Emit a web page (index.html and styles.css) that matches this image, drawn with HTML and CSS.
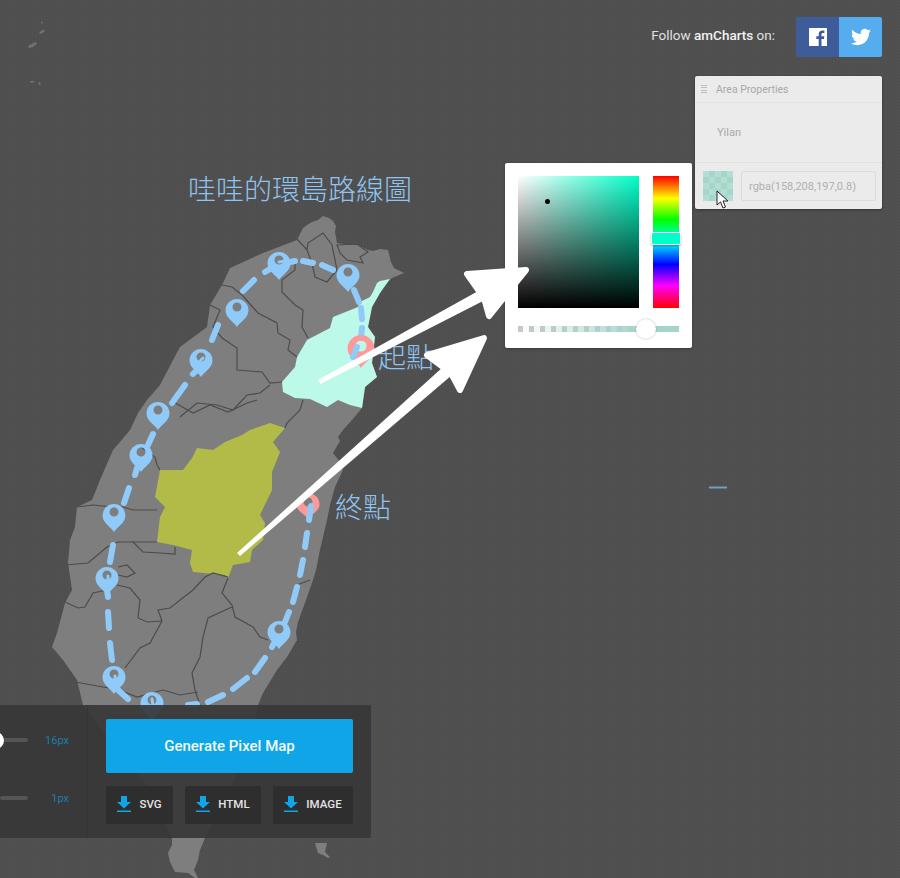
FILE: index.html
```html
<!DOCTYPE html>
<html lang="zh-Hant">
<head>
<meta charset="utf-8">
<title>Pixel Map Generator</title>
<link rel="stylesheet" href="styles.css">
</head>
<body>
<main class="stage">
  <svg class="canvas" width="900" height="878" viewBox="0 0 900 878">
    <g class="islets">
      <path d="M28 46L33 43 36 42 37 44 33 47 29 48Z"/>
      <path d="M39 33L42 30 45 30 44 32 41 34Z"/>
      <path d="M30 81L34 81 35 82 31 83Z"/>
      <path d="M38 83L40 82 41 84 39 85Z"/>
      <path d="M41 23L42 21 43 22 42 24Z"/>
    </g>
    <path class="land" d="M297 240L300 234 303 228 307 225 312 222 318 220 323 216 329 218 333 221 336 226 335 232 337 243 350 245 357 245 362 247 368 250 373 251 380 249 388 250 390 258 391 262 394 268 404 273 392 278 385 284 380 293 372 307 368 327 375 337 372 363 377 377 365 387 362 408 352 420 343 430 338 437 340 441 333 453 340 462 343 470 335 487 330 505 327 520 320 550 316 570 313 580 306 600 298 622 296 632 297 640 287 657 277 670 263 693 258 705 250 740 230 790 205 838 200 850 198 860 194 870 198 878 195 878 188 873 175 872 170 862 168 853 172 845 172 838 150 790 110 740 83 705 77 680 63 660 52 647 57 633 65 603 72 590 68 563 70 540 75 527 77 507 92 500 100 480 113 450 120 442 130 430 138 413 147 400 160 385 172 362 180 347 207 327 210 305 222 285 230 268 263 253Z"/>
    <path class="land" d="M315 843L327 843 325 852 330 857 328 858 323 855 318 853Z"/>
    <path class="yilan" d="M390 279L380 281 377 283 373 292 370 297 360 302 358 307 333 317 330 328 307 340 297 357 295 367 282 382 283 392 295 398 310 399 327 407 338 400 350 405 362 408 365 387 377 377 372 363 375 337 368 327 372 307 380 293Z"/>
    <path class="nantou" d="M285 428L270 423 250 430 242 435 225 442 213 450 197 448 192 458 183 470 160 470 155 497 165 507 160 517 157 542 173 545 192 550 190 563 193 572 225 575 228 578 233 565 250 562 252 550 263 540 265 523 260 515 272 490 272 472 280 452 273 442Z"/>
    <g class="borders">
      <path d="M297 239L307 250 308 243 323 233 332 245 337 270 327 282 315 277 312 263 307 250"/>
      <path d="M337 245L357 244 368 252 360 257 363 263 347 260 340 253Z"/>
      <path d="M295 262L295 270 282 280 282 292 295 305 303 310 302 327 308 338"/>
      <path d="M222 285L232 287 242 295 258 313 277 323 278 333 290 340 288 350 297 357"/>
      <path d="M210 305L220 310 213 327 222 338 237 348 237 370 262 372 270 383 282 382"/>
      <path d="M270 385L260 393 247 395 233 410 217 405 197 403 180 417"/>
      <path d="M303 400L300 410 287 423 285 428"/>
      <path d="M170 400L193 413 210 405 228 412 247 403 257 400"/>
      <path d="M141 447L155 457 157 465 160 470"/>
      <path d="M77 507L93 505 113 507 123 507 133 510 157 510"/>
      <path d="M157 542L133 542 143 552 160 553 175 554 175 547"/>
      <path d="M133 542L118 542 107 547 88 563 65 565"/>
      <path d="M118 567L127 565 135 573 127 577 118 575"/>
      <path d="M117 585L130 588 140 600 138 618 147 622 162 621"/>
      <path d="M65 602L78 608 85 607 93 593 107 590"/>
      <path d="M162 621L158 610 170 608 193 590 205 577 213 573 228 577"/>
      <path d="M162 621L150 643 140 648 125 668"/>
      <path d="M228 578L222 593 232 605 235 617 253 627 260 637 268 640"/>
      <path d="M232 607L208 618 203 637 200 657 192 673 195 690 200 705"/>
      <path d="M75 682L103 687 117 689 137 697 163 690 180 695 198 692"/>
      <path d="M310 580L297 585"/>
    </g>
    <g class="route">
      <path d="M354 290L359 302M361 308L362 319M362 328L361 338"/>
      <path d="M333 270L322 265M313 263L303 261M295 261L290 262"/>
      <path d="M270 269L265 272M254 280L243 291"/>
      <path d="M218 325L212 340M197 370L193 374M185 385L172 403"/>
      <path d="M153 434L148 445M137 468L135 475M129 488L124 503"/>
      <path d="M113 545L110 562M107 590L108 597M108 612L109 628M110 643L112 660"/>
      <path d="M118 690L128 699M188 705L197 704M208 702L223 695M233 689L247 678M255 672L265 658"/>
      <path d="M272 647L277 637M285 622L289 612M293 602L297 587M300 575L303 560M305 547L307 533"/>
    </g>
    <g class="pins">
      <use href="#pin" x="279" y="280"/>
      <use href="#pin" x="348" y="292"/>
      <use href="#pin" x="237" y="327"/>
      <use href="#pin" x="201" y="377"/>
      <use href="#pin" x="158" y="430"/>
      <use href="#pin" x="141" y="472"/>
      <use href="#pin" x="114" y="532"/>
      <use href="#pin" x="107" y="595"/>
      <use href="#pin" x="114" y="694"/>
      <use href="#pin" x="279" y="649"/>
      <use href="#pin" x="152" y="720"/>
    </g>
    <g class="pins-red">
      <use href="#pinlg" x="361" y="368"/>
      <use href="#pinsm" x="308" y="519"/>
    </g>
    <g class="route">
      <path d="M357 347L353 357M309 520L311 506"/>
    </g>
    <g class="route route-thin">
      <path d="M285 261L279 262M203 358L198 363M108 576L108 590M115 676L117 690M152 699L153 706"/>
    </g>
    <defs>
      <path id="pin" fill-rule="evenodd" d="M0 0C-2-4-11.500-9-11.500-16.500A11.500 11.500 0 1 1 11.500-16.500C11.500-9 2-4 0 0ZM0-24.500A4.500 4.500 0 1 0 0-15.500A4.500 4.500 0 1 0 0-24.500Z"/>
      <path id="pinlg" fill-rule="evenodd" d="M0 0C-2-4-13.500-11-13.500-19.500A13.500 13.500 0 1 1 13.500-19.500C13.500-11 2-4 0 0ZM0-27.500A5.500 5.500 0 1 0 0-16.500A5.500 5.500 0 1 0 0-27.500Z"/>
      <path id="pinsm" fill-rule="evenodd" d="M0 0C-2-4-11.500-8-11.500-14.500A11.500 11.500 0 1 1 11.500-14.500C11.500-8 2-4 0 0ZM0-21.500A4.500 4.500 0 1 0 0-12.500A4.500 4.500 0 1 0 0-21.500Z"/>
    </defs>
    <text class="label" x="188" y="200">哇哇的環島路線圖</text>
    <text class="label" x="378" y="368">起點</text>
    <text class="label" x="335" y="518">終點</text>
    <path class="tick" d="M709 487.500H727"/>
  </svg>

  <header class="follow">
    <span class="follow-text">Follow <b>amCharts</b> on:</span>
    <div class="social">
      <a class="social-btn fb">
        <svg width="20" height="20" viewBox="0 0 20 20"><path d="M1.500 1h17a.5.5 0 0 1 .5.5v17a.5.5 0 0 1-.5.5H13.500v-7h2.400l.4-2.800h-2.800V7.400c0-.8.2-1.400 1.400-1.400h1.500V3.500c-.3 0-1.100-.1-2.100-.1-2.100 0-3.600 1.300-3.600 3.700v2.100H8.300V12h2.400v7H1.500a.5.5 0 0 1-.5-.5v-17a.5.5 0 0 1 .5-.5z"/></svg>
      </a>
      <a class="social-btn tw">
        <svg width="20" height="20" viewBox="0 0 24 24"><path d="M23.950 4.570a10 10 0 0 1-2.820.77 4.960 4.960 0 0 0 2.160-2.720c-.95.550-2 .96-3.130 1.190a4.920 4.920 0 0 0-8.380 4.480C7.690 8.100 4.070 6.130 1.640 3.160a4.820 4.820 0 0 0-.67 2.480c0 1.710.87 3.210 2.190 4.100a4.900 4.900 0 0 1-2.230-.62v.06a4.920 4.920 0 0 0 3.950 4.830 5 5 0 0 1-2.210.08 4.940 4.940 0 0 0 4.600 3.420A9.870 9.870 0 0 1 0 19.540a14 14 0 0 0 7.560 2.210c9.050 0 14-7.500 14-13.980 0-.21 0-.42-.02-.63a9.940 9.940 0 0 0 2.460-2.550z"/></svg>
      </a>
    </div>
  </header>

  <aside class="props">
    <div class="props-head">
      <span class="grip"><i></i><i></i><i></i><i></i></span>
      <span>Area Properties</span>
    </div>
    <div class="props-name">Yilan</div>
    <div class="props-color">
      <div class="swatch"></div>
      <div class="color-input">rgba(158,208,197,0.8)</div>
    </div>
    <svg class="cursor" width="14" height="20" viewBox="0 0 14 20"><path d="M1 1v14l3.500-3 2.500 6 2.500-1-2.500-6h5z"/></svg>
  </aside>

  <section class="picker">
    <div class="picker-top">
      <div class="sv"><span class="sv-dot"></span></div>
      <div class="hue"><span class="hue-thumb"></span></div>
    </div>
    <div class="alpha"><span class="alpha-knob"></span></div>
  </section>

  <section class="tools">
    <div class="sliders">
      <div class="slider-row">
        <div class="track"><span class="knob"></span></div>
        <span class="value">16px</span>
      </div>
      <div class="slider-row">
        <div class="track"></div>
        <span class="value">1px</span>
      </div>
    </div>
    <div class="actions">
      <button class="generate">Generate Pixel Map</button>
      <div class="downloads">
        <button class="dl dl-svg"><svg width="14" height="16" viewBox="0 0 14 16"><path class="dl-arrow" d="M4 0h6v6h4L7 12.500 0 6h4z"/><path class="dl-arrow" d="M0 14.500h14V16H0z"/></svg>SVG</button>
        <button class="dl dl-html"><svg width="14" height="16" viewBox="0 0 14 16"><path class="dl-arrow" d="M4 0h6v6h4L7 12.500 0 6h4z"/><path class="dl-arrow" d="M0 14.500h14V16H0z"/></svg>HTML</button>
        <button class="dl dl-image"><svg width="14" height="16" viewBox="0 0 14 16"><path class="dl-arrow" d="M4 0h6v6h4L7 12.500 0 6h4z"/><path class="dl-arrow" d="M0 14.500h14V16H0z"/></svg>IMAGE</button>
      </div>
    </div>
  </section>

  <svg class="arrows" width="900" height="878" viewBox="0 0 900 878">
    <path class="shaft" d="M318 380L480 290 485 300 320.500 384Z"/>
    <path class="head" d="M467 274L526 270 489 316 484 298 479 291Z"/>
    <path class="shaft" d="M237 553L443 367 452 375 240 556Z"/>
    <path class="head" d="M427 355L484 338 460 390 452 375 443 367Z"/>
  </svg>
</main>
</body>
</html>
```

FILE: styles.css
```css
* { box-sizing: border-box; }

html, body {
  margin: 0;
  padding: 0;
}

body {
  background: #4f4f4f;
  font-family: Roboto, "Liberation Sans", sans-serif;
}

.stage {
  position: relative;
  width: 900px;
  height: 878px;
  overflow: hidden;
  background-color: #4f4f4f;
  background-image: repeating-conic-gradient(#4e4e4e 0 25%, #515151 0 50%);
  background-size: 3px 3px;
}

.canvas,
.arrows {
  position: absolute;
  left: 0;
  top: 0;
  display: block;
}

.shaft { fill: #fff; }

.head {
  fill: #fff;
  stroke: #fff;
  stroke-width: 6;
  stroke-linejoin: round;
}

.islets path { fill: #707070; }
.land { fill: #7e7e7e; }
.yilan { fill: #bdf9e8; }
.nantou { fill: #b3bb48; }

.borders path {
  fill: none;
  stroke: #4c4c4c;
  stroke-width: 1.2;
}

.route path {
  fill: none;
  stroke: #90caf9;
  stroke-width: 6;
  stroke-linecap: round;
}

.route-thin path { stroke-width: 3; }

.pins { fill: #90caf9; }
.pins-red { fill: #ff9999; }

.label {
  font-family: "Noto Sans CJK TC", sans-serif;
  font-size: 28px;
  font-weight: 300;
  fill: #8ec4ee;
}

.tick {
  stroke: #6f9fc6;
  stroke-width: 2;
}

.follow {
  position: absolute;
  top: 17px;
  right: 18px;
  display: flex;
  align-items: flex-start;
  gap: 21px;
}

.follow-text {
  padding-top: 10px;
  color: #e0e0e0;
  font-size: 13.5px;
  line-height: 16px;
}

.follow-text b { font-weight: 500; color: #f2f2f2; }

.social {
  display: flex;
  border-radius: 2px;
  overflow: hidden;
}

.social-btn {
  width: 43px;
  height: 40px;
  display: flex;
  align-items: center;
  justify-content: center;
}

.social-btn svg { fill: #fff; display: block; }
.fb { background: #3f5c9a; }
.tw { background: #55acee; }

.props {
  position: absolute;
  left: 695px;
  top: 76px;
  width: 187px;
  height: 133px;
  background: #ebebeb;
  border-radius: 2px;
  box-shadow: 0 1px 3px rgba(0, 0, 0, .35);
  display: flex;
  flex-direction: column;
  color: #a8a8a8;
}

.props-head {
  height: 27px;
  padding-left: 6px;
  display: flex;
  align-items: center;
  gap: 9px;
  font-size: 10.5px;
  border-bottom: 1px solid #e3e3e3;
}

.grip {
  width: 6px;
  display: flex;
  flex-direction: column;
  gap: 1.500px;
}

.grip i {
  display: block;
  height: 1px;
  background: #bdbdbd;
}

.props-name {
  flex: 1;
  padding-left: 22px;
  display: flex;
  align-items: center;
  font-size: 11px;
  border-bottom: 1px solid #e0e0e0;
}

.props-color {
  height: 46px;
  padding: 8px 6px 8px 8px;
  display: flex;
  gap: 8px;
}

.swatch {
  width: 30px;
  height: 30px;
  background-color: #a9d8cd;
  background-image: repeating-conic-gradient(#a6d5ca 0 25%, #b3ded4 0 50%);
  background-size: 12px 12px;
}

.color-input {
  flex: 1;
  height: 30px;
  padding-left: 7px;
  border: 1px solid #dcdcdc;
  border-radius: 2px;
  display: flex;
  align-items: center;
  font-size: 11px;
  color: #b0b0b0;
}

.cursor {
  position: absolute;
  left: 21px;
  top: 114px;
}

.cursor path {
  fill: #fff;
  stroke: #222;
  stroke-width: 1;
}

.picker {
  position: absolute;
  left: 505px;
  top: 163px;
  width: 187px;
  height: 185px;
  padding: 13px 13px 0;
  background: #fff;
  border-radius: 2px;
  box-shadow: 0 1px 3px rgba(0, 0, 0, .3);
}

.picker-top {
  display: flex;
  justify-content: space-between;
}

.sv {
  position: relative;
  width: 121px;
  height: 132px;
  background:
    linear-gradient(to bottom, rgba(0, 0, 0, 0), #000),
    linear-gradient(to right, #fff, rgba(255, 255, 255, 0)),
    #00ffc8;
}

.sv-dot {
  position: absolute;
  left: 27px;
  top: 23px;
  width: 5px;
  height: 5px;
  border-radius: 50%;
  background: #000;
}

.hue {
  position: relative;
  width: 26px;
  height: 132px;
  background: linear-gradient(to bottom, #f00 0%, #ff0 17%, #0f0 33%, #0ff 50%, #00f 67%, #f0f 83%, #f00 100%);
}

.hue-thumb {
  position: absolute;
  left: -2px;
  top: 56px;
  width: 30px;
  height: 13px;
  background: #00ffc8;
  border: 1px solid #fff;
  border-radius: 2px;
  box-shadow: 0 1px 2px rgba(0, 0, 0, .3);
}

.alpha {
  position: relative;
  height: 6px;
  margin-top: 18px;
  background:
    linear-gradient(to right, rgba(165, 213, 202, 0), #a5d5ca 75%),
    repeating-linear-gradient(to right, #c8c8c8 0 5px, #fff 5px 11px);
}

.alpha-knob {
  position: absolute;
  left: 118px;
  top: -7px;
  width: 20px;
  height: 20px;
  border-radius: 50%;
  background: #fff;
  box-shadow: 0 0 2px rgba(0, 0, 0, .3);
}

.tools {
  position: absolute;
  left: 0;
  top: 705px;
  width: 371px;
  height: 133px;
  background: rgba(55, 55, 55, .92);
  border-radius: 0 2px 2px 0;
  display: flex;
}

.sliders {
  width: 88px;
  padding: 30px 18px 0 0;
  border-right: 1px solid #353535;
  display: flex;
  flex-direction: column;
  gap: 48px;
}

.slider-row {
  height: 10px;
  display: flex;
  align-items: center;
  justify-content: space-between;
}

.track {
  position: relative;
  width: 28px;
  height: 4px;
  background: #555;
  border-radius: 2px;
}

.knob {
  position: absolute;
  left: -13px;
  top: -6px;
  width: 17px;
  height: 17px;
  background: #fff;
  border-radius: 50%;
}

.value {
  font-size: 11px;
  color: #1d7dab;
}

.actions {
  flex: 1;
  padding: 14px 18px 0;
  display: flex;
  flex-direction: column;
  gap: 13px;
}

.generate {
  height: 54px;
  border: 0;
  border-radius: 2px;
  background: #0fa5e6;
  color: #f2f9fd;
  font: 500 15px Roboto, sans-serif;
}

.downloads {
  display: flex;
  gap: 12px;
}

.dl {
  height: 38px;
  padding: 0 0 2px;
  border: 0;
  border-radius: 2px;
  background: #2e2e2e;
  color: #e4e4e4;
  font: 500 11.5px Roboto, sans-serif;
  display: flex;
  align-items: center;
  justify-content: center;
  gap: 8px;
}

.dl-svg { width: 67px; }
.dl-html { width: 76px; }
.dl-image { width: 80px; }
.dl-arrow { fill: #0fa5e6; }
```
